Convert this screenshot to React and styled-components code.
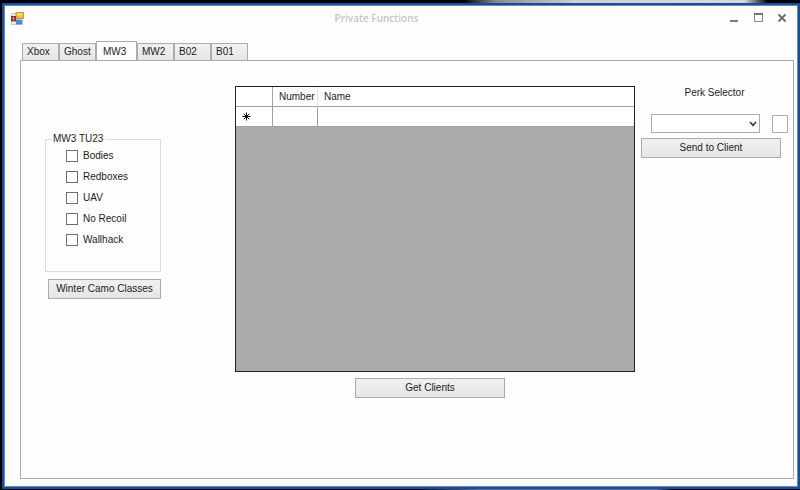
import React, { useState } from 'react';
import styled, { createGlobalStyle, ThemeProvider } from 'styled-components';

const theme = {
  colors: {
    frame: '#1f4c91',
    frameEdge: '#5d8fcf',
    window: '#fdfdfd',
    line: '#acacac',
    groupLine: '#dcdcdc',
    text: '#1c1c1c',
    title: '#c6c6c6',
    gridBackground: '#ababab',
    gridLine: '#a0a0a0',
  },
  fontSize: {
    s: '10px',
  },
};

const tabs = ['Xbox', 'Ghost', 'MW3', 'MW2', 'B02', 'B01'];
const mods = ['Bodies', 'Redboxes', 'UAV', 'No Recoil', 'Wallhack'];

const App = () => {
  const [activeTab, setActiveTab] = useState('MW3');

  return (
    <ThemeProvider theme={theme}>
      <GlobalStyle />
      <Desktop>
        <Window>
          <TitleBar>
            <FormIcon />
            <Title>Private Functions</Title>
            <WindowControls />
          </TitleBar>
          <TabList role="tablist">
            {tabs.map((tab) => (
              <Tab
                key={tab}
                type="button"
                role="tab"
                aria-selected={tab === activeTab}
                $active={tab === activeTab}
                onClick={() => setActiveTab(tab)}
              >
                {tab}
              </Tab>
            ))}
          </TabList>
          <TabPanel role="tabpanel" aria-label={activeTab}>
            <ModsColumn>
              <GroupBox>
                <legend>MW3 TU23</legend>
                {mods.map((mod) => (
                  <CheckLabel key={mod}>
                    <CheckBox type="checkbox" />
                    {mod}
                  </CheckLabel>
                ))}
              </GroupBox>
              <Button type="button">Winter Camo Classes</Button>
            </ModsColumn>
            <ClientsColumn>
              <ClientGrid />
              <ClientsButton type="button">Get Clients</ClientsButton>
            </ClientsColumn>
            <PerkColumn>
              <PerkLabel htmlFor="perk">Perk Selector</PerkLabel>
              <PerkRow>
                <SelectWrapper>
                  <Select id="perk" defaultValue="">
                    <option value="" />
                  </Select>
                  <svg width="8" height="6" viewBox="0 0 8 6" aria-hidden="true">
                    <path d="M1 1 L4 4.3 L7 1" fill="none" stroke="#444" strokeWidth="1.8" />
                  </svg>
                </SelectWrapper>
                <ClientInput type="text" aria-label="Client" />
              </PerkRow>
              <SendButton type="button">Send to Client</SendButton>
            </PerkColumn>
          </TabPanel>
        </Window>
      </Desktop>
    </ThemeProvider>
  );
};

const FormIcon = () => (
  <svg width="13" height="13" viewBox="0 0 13 13" aria-hidden="true">
    <rect x="0.5" y="1.5" width="11" height="11" fill="#e9edf3" stroke="#c3c9d3" />
    <rect x="5" y="0.5" width="7.5" height="6" fill="#f0bd3c" stroke="#b98a20" strokeWidth="0.8" />
    <rect x="6" y="1.3" width="5.5" height="2" fill="#fbdc7c" />
    <rect x="0.4" y="4.4" width="4.2" height="4.6" fill="#a3402f" stroke="#6e2a22" strokeWidth="0.8" />
    <rect x="1.6" y="5.4" width="1.5" height="2" fill="#dd9a86" />
    <rect x="5.2" y="8" width="5.4" height="4" fill="#4f8de0" stroke="#3b70bd" strokeWidth="0.6" />
  </svg>
);

const WindowControls = () => (
  <Controls>
    <ControlButton type="button" aria-label="Minimize">
      <svg width="10" height="10" viewBox="0 0 10 10">
        <path d="M1 8 H9" stroke="#7a7a7a" strokeWidth="2" />
      </svg>
    </ControlButton>
    <ControlButton type="button" aria-label="Maximize">
      <svg width="10" height="10" viewBox="0 0 10 10">
        <path d="M1.5 0.5 H9.5 V8.5 H1.5 Z" fill="none" stroke="#858585" />
        <path d="M1 1 H10" stroke="#747474" strokeWidth="2" />
      </svg>
    </ControlButton>
    <ControlButton type="button" aria-label="Close">
      <svg width="10" height="10" viewBox="0 0 10 10">
        <path d="M1.5 1.5 L8.5 8.5 M8.5 1.5 L1.5 8.5" stroke="#6a6a6a" strokeWidth="1.8" />
      </svg>
    </ControlButton>
  </Controls>
);

const ClientGrid = () => (
  <GridArea>
    <Table>
      <thead>
        <tr>
          <th aria-label="Row" />
          <th>Number</th>
          <th>Name</th>
        </tr>
      </thead>
      <tbody>
        <tr>
          <td>
            <svg width="9" height="9" viewBox="0 0 9 9" aria-hidden="true">
              <path
                d="M4.5 0.5 V8.5 M0.5 4.5 H8.5 M1.7 1.7 L7.3 7.3 M7.3 1.7 L1.7 7.3"
                stroke="#111"
                strokeWidth="1"
              />
            </svg>
          </td>
          <td />
          <td />
        </tr>
      </tbody>
    </Table>
  </GridArea>
);

const GlobalStyle = createGlobalStyle`
  * {
    box-sizing: border-box;
  }
  body {
    margin: 0;
  }
  body, button, input, select {
    font-family: 'Liberation Sans', Arial, sans-serif;
    font-size: ${theme.fontSize.s};
    line-height: 14px;
    color: ${theme.colors.text};
  }
`;

const Desktop = styled.div`
  display: flex;
  min-height: 100vh;
  padding: 3px 0 1px 2px;
  background:
    linear-gradient(90deg, transparent 58%, #8a8a8a 62%, #d0d0d0 72%, #d8d8d8 93%, transparent 96%) top / 100% 3px
      no-repeat,
    linear-gradient(90deg, transparent 52%, #5c6da0 60%, #5c6da0 82%, transparent 84%) bottom / 100% 1px no-repeat,
    #02030a;
`;

const Window = styled.div`
  flex: 1;
  display: flex;
  flex-direction: column;
  padding: 0 4px 8px 16px;
  border: 2px solid ${({ theme }) => theme.colors.frame};
  outline: 1px solid ${({ theme }) => theme.colors.frameEdge};
  outline-offset: -3px;
  background: ${({ theme }) => theme.colors.window};
`;

const TitleBar = styled.header`
  display: flex;
  align-items: center;
  height: 26px;
  margin-left: -9px;
  padding-right: 7px;
`;

const Title = styled.h1`
  flex: 1;
  margin: 0;
  font-family: 'Open Sans', sans-serif;
  font-size: ${({ theme }) => theme.fontSize.s};
  font-weight: 600;
  text-align: center;
  color: ${({ theme }) => theme.colors.title};
`;

const Controls = styled.div`
  display: flex;
  gap: 14px;
`;

const ControlButton = styled.button`
  display: flex;
  padding: 0;
  border: none;
  background: none;
`;

const TabList = styled.div`
  display: flex;
  align-items: flex-end;
  margin-top: 10px;
  padding-left: 2px;
`;

const Tab = styled.button`
  width: ${({ $active }) => ($active ? '41px' : '37px')};
  height: ${({ $active }) => ($active ? '20px' : '17px')};
  margin-bottom: ${({ $active }) => ($active ? '-1px' : '0')};
  padding: 0 0 0 ${({ $active }) => ($active ? '6px' : '4px')};
  border: 1px solid ${({ theme }) => theme.colors.line};
  border-bottom: none;
  background: ${({ $active, theme }) => ($active ? theme.colors.window : 'linear-gradient(#f1f1f1, #e6e6e6)')};
  text-align: left;
  white-space: nowrap;
`;

const TabPanel = styled.section`
  flex: 1;
  display: flex;
  align-items: flex-start;
  padding: 25px 5px 26px 24px;
  border: 1px solid ${({ theme }) => theme.colors.line};
`;

const Button = styled.button`
  height: 20px;
  padding: 0 4px;
  border: 1px solid ${({ theme }) => theme.colors.line};
  background: linear-gradient(#f0f0f0, #e5e5e5);
  white-space: nowrap;
`;

const ModsColumn = styled.div`
  display: flex;
  flex-direction: column;
  width: 116px;
  margin-top: 46px;
  ${Button} {
    margin: 7px 0 0 3px;
  }
`;

const GroupBox = styled.fieldset`
  display: flex;
  flex-direction: column;
  gap: 7px;
  min-width: 0;
  margin: 0;
  padding: 3px 0 24px 20px;
  border: 1px solid ${({ theme }) => theme.colors.groupLine};
  legend {
    margin-left: -15px;
    padding: 0 2px;
  }
`;

const CheckLabel = styled.label`
  display: flex;
  align-items: center;
  gap: 5px;
`;

const CheckBox = styled.input`
  appearance: none;
  width: 12px;
  height: 12px;
  margin: 0;
  border: 1px solid #6f6f6f;
  background: #fff;
  &:checked {
    background: #555;
    box-shadow: inset 0 0 0 2px #fff;
  }
`;

const ClientsColumn = styled.div`
  flex: 1;
  display: flex;
  flex-direction: column;
  align-items: flex-start;
  gap: 6px;
  margin-left: 74px;
`;

const GridArea = styled.div`
  width: 100%;
  min-height: 286px;
  border: 1px solid #222;
  background: ${({ theme }) => theme.colors.gridBackground};
`;

const Table = styled.table`
  width: 100%;
  border-collapse: separate;
  border-spacing: 0;
  table-layout: fixed;
  background: #fff;
  th,
  td {
    height: 20px;
    padding: 0 6px;
    border-bottom: 1px solid ${({ theme }) => theme.colors.gridLine};
    font-weight: normal;
    text-align: left;
  }
  th:first-child,
  td:first-child {
    width: 37px;
    border-right: 1px solid ${({ theme }) => theme.colors.gridLine};
  }
  th:nth-child(2) {
    width: 45px;
    border-right: 1px solid #e3e3e3;
  }
  td:nth-child(2) {
    border-right: 1px solid ${({ theme }) => theme.colors.gridLine};
  }
  svg {
    display: block;
  }
`;

const ClientsButton = styled(Button)`
  width: 150px;
  margin-left: 30%;
`;

const PerkColumn = styled.div`
  display: flex;
  flex-direction: column;
  width: 147px;
  margin-left: 6px;
`;

const PerkLabel = styled.label`
  text-align: center;
`;

const PerkRow = styled.div`
  display: flex;
  align-items: center;
  gap: 12px;
  margin: 14px 0 5px 10px;
`;

const SelectWrapper = styled.div`
  position: relative;
  flex: 1;
  svg {
    position: absolute;
    top: 7px;
    right: 3px;
    pointer-events: none;
  }
`;

const Select = styled.select`
  appearance: none;
  display: block;
  width: 100%;
  height: 19px;
  padding: 0 16px 0 4px;
  border: 1px solid ${({ theme }) => theme.colors.line};
  border-radius: 0;
  background: #fff;
`;

const ClientInput = styled.input`
  width: 16px;
  height: 18px;
  padding: 0 2px;
  border: 1px solid ${({ theme }) => theme.colors.line};
  background: #fff;
`;

const SendButton = styled(Button)`
  width: 140px;
`;

export default App;
